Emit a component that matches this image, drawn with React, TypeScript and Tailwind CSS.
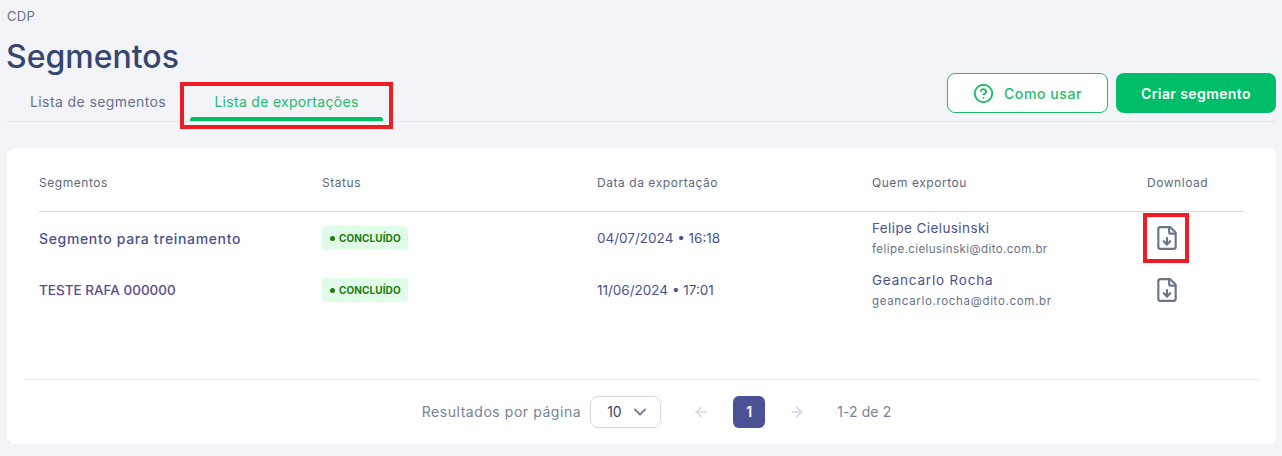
import React from 'react';
import { ArrowLeft, ArrowRight, ChevronDown, CircleHelp, FileDown } from 'lucide-react';

const rows = [
  {
    name: 'Segmento para treinamento',
    nameClass: 'text-[14px] tracking-[0.65px] text-[#4a5190]',
    date: '04/07/2024 • 16:18',
    user: 'Felipe Cielusinski',
    userClass: 'tracking-[0.4px]',
    email: 'felipe.cielusinski@dito.com.br',
    emailClass: 'tracking-[0.43px]',
    highlight: true,
  },
  {
    name: 'TESTE RAFA 000000',
    nameClass: 'text-[13.5px] text-[#5b4a8c]',
    date: '11/06/2024 • 17:01',
    user: 'Geancarlo Rocha',
    userClass: 'tracking-[0.8px]',
    email: 'geancarlo.rocha@dito.com.br',
    emailClass: 'tracking-[0.67px]',
    highlight: false,
  },
];

const gridCols = 'grid grid-cols-[283px_275px_275px_275px_96px]';

const App: React.FC = () => {
  return (
    <div className="w-[1282px] h-[456px] overflow-hidden bg-[#f2f4f8] font-['Inter',sans-serif] px-[6px]">
      <div className="pt-[8px] pl-[1px] h-[24px] text-[13px] leading-[16px] tracking-[0.3px] text-[#68708a]">CDP</div>
      <h1 className="mt-[8px] h-[50px] text-[32px] leading-[50px] font-medium text-[#36466f]">Segmentos</h1>

      <div className="flex items-start justify-between h-[40px] border-b border-[#e3e6ec]">
        <div className="flex">
          <div className="w-[184px] h-[39px] pl-[24px] pt-[11px] text-[14px] leading-[18px] tracking-[0.4px] text-[#67708a]">Lista de segmentos</div>
          <div className="relative w-[193px] h-[39px] text-center pt-[11px] text-[14px] leading-[18px] tracking-[0.3px] text-[#1fbb6c]">
            Lista de exportações
            <div className="absolute bottom-0 left-0 right-0 h-[4px] rounded-t-[3px] bg-[#00bd68]" />
            <div className="absolute left-[-10px] right-[-10px] top-0 h-[47px] border-[4px] border-[#ee1c25]" />
          </div>
        </div>
        <div className="flex gap-[8px] mt-[-9px]">
          <button className="flex items-center justify-center gap-[10px] w-[161px] h-[40px] rounded-[8px] border border-[#1fbb6c] bg-white text-[14px] tracking-[0.6px] font-medium text-[#1fbb6c]">
            <CircleHelp size={21} strokeWidth={2.2} />
            Como usar
          </button>
          <button className="w-[160px] h-[40px] rounded-[8px] bg-[#00bd68] text-[14px] tracking-[0.4px] font-semibold text-white">Criar segmento</button>
        </div>
      </div>

      <div className="mt-[26px] w-[1269px] ml-[1px] h-[296px] rounded-[8px] bg-white">
        <div className="px-[32px]">
          <div className={`${gridCols} items-center h-[64px] pt-[7px] border-b border-[#d9dbe0] text-[12px] tracking-[0.55px] text-[#5e6780]`}>
            <div>Segmentos</div>
            <div>Status</div>
            <div>Data da exportação</div>
            <div>Quem exportou</div>
            <div>Download</div>
          </div>
          {rows.map((row) => (
            <div key={row.name} className={`${gridCols} items-center h-[52px]`}>
              <div className={`font-medium ${row.nameClass}`}>{row.name}</div>
              <div className="flex">
                <span className="flex items-center gap-[4px] w-[86px] h-[24px] pl-[8px] rounded-[4px] bg-[#e0fbe8] text-[10px] tracking-[0.1px] font-bold text-[#1f7a10]">
                  <span className="w-[5px] h-[5px] rounded-full bg-[#1f7a10]" />
                  CONCLUÍDO
                </span>
              </div>
              <div className="text-[13.5px] text-[#4a5190]">{row.date}</div>
              <div className="-mt-[2px]">
                <div className={`text-[13.5px] leading-[20px] text-[#4a5190] ${row.userClass}`}>{row.user}</div>
                <div className={`mt-[3px] text-[11.5px] leading-[16px] text-[#68708a] ${row.emailClass}`}>{row.email}</div>
              </div>
              <div className="relative h-full flex items-center pl-[7px]">
                <FileDown size={26} strokeWidth={2} className="text-[#6b7488]" />
                {row.highlight && (
                  <div className="absolute left-[-4px] top-[1px] w-[46px] h-[50px] border-[4px] border-[#ee1c25]" />
                )}
              </div>
            </div>
          ))}
        </div>

        <div className="mx-[17px] mt-[63px] h-[64px] pl-[30px] border-t border-[#e8eaef] flex items-center justify-center text-[14px] text-[#7a8196]">
          <span className="tracking-[0.55px]">Resultados por página</span>
          <div className="ml-[9px] flex items-center justify-between w-[71px] h-[32px] pl-[16px] pr-[10px] rounded-[8px] border border-[#d6d9e2] text-[#3c4468]">
            10
            <ChevronDown size={20} strokeWidth={2.4} className="text-[#7a8196]" />
          </div>
          <ArrowLeft size={16} strokeWidth={2.6} className="ml-[32px] text-[#d6d9e2]" />
          <div className="ml-[24px] w-[32px] h-[32px] rounded-[6px] bg-[#4a5194] text-white text-[14px] font-semibold flex items-center justify-center">1</div>
          <ArrowRight size={16} strokeWidth={2.6} className="ml-[24px] text-[#d6d9e2]" />
          <span className="ml-[32px] tracking-[0.1px]">1-2 de 2</span>
        </div>
      </div>
    </div>
  );
};

export default App;
